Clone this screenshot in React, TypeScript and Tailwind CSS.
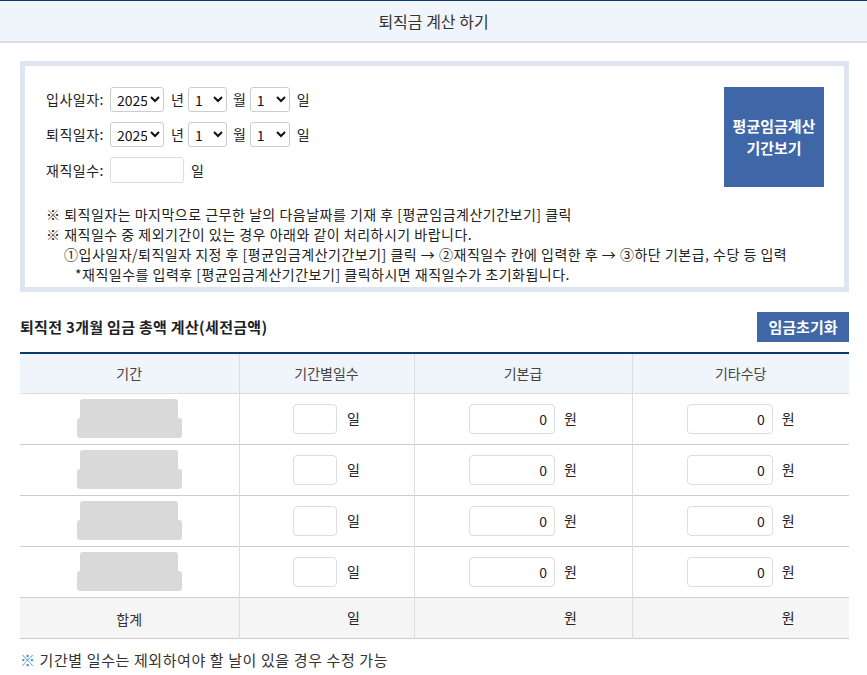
import React from "react";

const FONT = { fontFamily: '"Noto Sans CJK KR", "Noto Sans", sans-serif' };

function Sel({ value, w, options }: { value: string; w: string; options: string[] }) {
  return (
    <select
      defaultValue={value}
      className={`${w} h-[25px] border border-[#ccc] rounded-[3px] bg-white text-[14px] text-[#111] pl-[2px]`}
      style={FONT}
    >
      {options.map((o) => (
        <option key={o} value={o}>
          {o}
        </option>
      ))}
    </select>
  );
}

function DateRow({ label }: { label: string }) {
  const years = ["2023", "2024", "2025", "2026"];
  const months = Array.from({ length: 12 }, (_, i) => String(i + 1));
  const days = Array.from({ length: 31 }, (_, i) => String(i + 1));
  return (
    <div className="flex items-center h-[25px] text-[14px] text-[#222]">
      <span className="w-[64px] tracking-[0.5px]">{label}</span>
      <Sel value="2025" w="w-[54px]" options={years} />
      <span className="ml-[7px] mr-[4px]">년</span>
      <Sel value="1" w="w-[39px]" options={months} />
      <span className="ml-[6px] mr-[4px]">월</span>
      <Sel value="1" w="w-[40px]" options={days} />
      <span className="ml-[7px]">일</span>
    </div>
  );
}

function Placeholder() {
  return (
    <div className="flex flex-col items-center">
      <div className="w-[98px] h-[19px] bg-[#d9d9d9] rounded-t-[3px]" />
      <div className="w-[105px] h-[20px] bg-[#d9d9d9] rounded-[3px]" />
    </div>
  );
}

function NumInput({ w, value, invisible }: { w: string; value?: string; invisible?: boolean }) {
  if (invisible) return <span className={`${w} inline-block h-[30px]`} />;
  return (
    <input
      defaultValue={value}
      className={`${w} h-[30px] border border-[#ddd] rounded-[4px] text-right pr-[7px] text-[14px] text-[#222] bg-white`}
      style={FONT}
    />
  );
}

function Row({ total }: { total?: boolean }) {
  const cellBase = "border-l border-[#ddd] first:border-l-0";
  return (
    <tr
      className={
        total
          ? "h-[41px] bg-[#f5f5f5] border-t border-[#0c3a6a] border-b border-b-[#ccc]"
          : "h-[51px] border-b border-[#ccc]"
      }
    >
      <td className={`${cellBase} text-center`}>
        {total ? <span className="text-[14px] text-[#333]">합계</span> : <Placeholder />}
      </td>
      <td className={cellBase}>
        <div className="flex items-center justify-center">
          <NumInput w="w-[44px]" invisible={total} />
          <span className="ml-[10px] text-[14px] text-[#222]">일</span>
        </div>
      </td>
      <td className={cellBase}>
        <div className="flex items-center justify-center">
          <NumInput w="w-[86px]" value="0" invisible={total} />
          <span className="ml-[9px] text-[14px] text-[#222]">원</span>
        </div>
      </td>
      <td className={cellBase}>
        <div className="flex items-center justify-center">
          <NumInput w="w-[86px]" value="0" invisible={total} />
          <span className="ml-[9px] text-[14px] text-[#222]">원</span>
        </div>
      </td>
    </tr>
  );
}

export default function App() {
  return (
    <div className="w-[867px] h-[675px] bg-white overflow-hidden" style={FONT}>
      <div className="h-[43px] border-t border-[#0c3a6a] bg-[#f0f4fb] border-b-2 border-b-[#dddde3] flex items-center justify-center">
        <h1 className="text-[16px] text-[#333] font-normal">퇴직금 계산 하기</h1>
      </div>

      <div className="ml-[20px] w-[829px]">
        <div className="mt-[18px] h-[231px] border-[5px] border-[#dfe4f2] bg-white pl-[21px] pr-[20px] pt-[21px]">
          <div className="flex justify-between">
            <div className="flex flex-col gap-[10px]">
              <DateRow label="입사일자:" />
              <DateRow label="퇴직일자:" />
              <div className="flex items-center h-[26px] text-[14px] text-[#222]">
                <span className="w-[64px] tracking-[0.5px]">재직일수:</span>
                <input className="w-[74px] h-[26px] border border-[#ddd] rounded-[3px] bg-white" />
                <span className="ml-[7px]">일</span>
              </div>
            </div>
            <button className="w-[100px] h-[100px] bg-[#3f67a8] text-white font-bold text-[15px] leading-[22px]">
              평균임금계산
              <br />
              기간보기
            </button>
          </div>
          <div className="mt-[17px] text-[14px] leading-[20px] tracking-[0.5px] text-[#222] whitespace-nowrap">
            <p>※ 퇴직일자는 마지막으로 근무한 날의 다음날짜를 기재 후 [평균임금계산기간보기] 클릭</p>
            <p>※ 재직일수 중 제외기간이 있는 경우 아래와 같이 처리하시기 바랍니다.</p>
            <p className="pl-[18px]">
              ①입사일자/퇴직일자 지정 후 [평균임금계산기간보기] 클릭 → ②재직일수 칸에 입력한 후 → ③하단 기본급, 수당 등 입력
            </p>
            <p className="pl-[29px]">*재직일수를 입력후 [평균임금계산기간보기] 클릭하시면 재직일수가 초기화됩니다.</p>
          </div>
        </div>

        <div className="mt-[20px] h-[30px] flex items-center justify-between">
          <h2 className="text-[15px] font-bold text-[#222] tracking-[0.3px]">퇴직전 3개월 임금 총액 계산(세전금액)</h2>
          <button className="w-[92px] h-[30px] bg-[#3f67a8] text-white font-bold text-[15px]">임금초기화</button>
        </div>

        <table className="mt-[10px] w-[829px] border-collapse table-fixed border-t-2 border-[#0c3a6a]">
          <colgroup>
            <col style={{ width: 219 }} />
            <col style={{ width: 175 }} />
            <col style={{ width: 218 }} />
            <col style={{ width: 217 }} />
          </colgroup>
          <thead>
            <tr className="h-[40px] bg-[#f0f4fb] border-b border-[#ddd]">
              {["기간", "기간별일수", "기본급", "기타수당"].map((h, i) => (
                <th
                  key={h}
                  className={`font-normal text-[14px] text-[#444] ${i > 0 ? "border-l border-[#ddd]" : ""}`}
                >
                  {h}
                </th>
              ))}
            </tr>
          </thead>
          <tbody>
            <Row />
            <Row />
            <Row />
            <Row />
            <Row total />
          </tbody>
        </table>

        <p className="mt-[11px] text-[15px] leading-[20px] tracking-[0.6px] text-[#333]">
          <span className="text-[#3d8fd6]">※</span> 기간별 일수는 제외하여야 할 날이 있을 경우 수정 가능
        </p>
      </div>
    </div>
  );
}
